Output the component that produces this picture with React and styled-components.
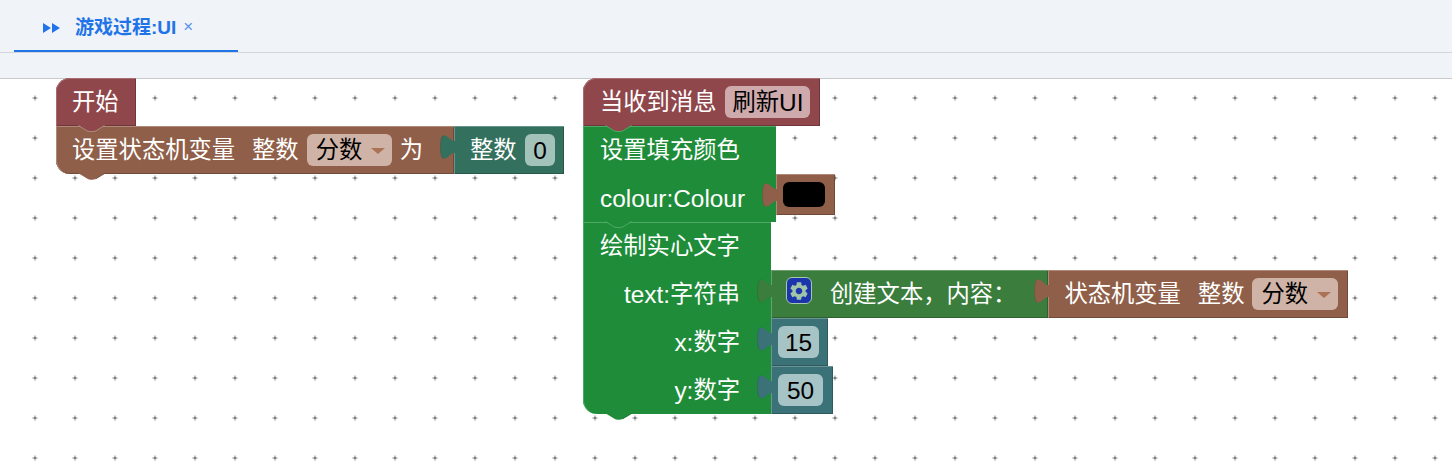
import React from "react";
import styled, { createGlobalStyle } from "styled-components";
import { MdSettings } from "react-icons/md";

const tones = {
  event: { bg: "#8f474c", hi: "#a66c70", lo: "#6f373b", chip: "#cfaaac", arrow: "#8f474c" },
  variable: { bg: "#8f5f49", hi: "#b08a79", lo: "#6f4a39", chip: "#cfb3a6", arrow: "#ab7256" },
  action: { bg: "#1e8c38", hi: "#4ea965", lo: "#176d2c", chip: "#a5d1af", arrow: "#1e8c38" },
  text: { bg: "#3a7d3c", hi: "#6e9f6f", lo: "#2d612f", chip: "#a7c9a8", arrow: "#3a7d3c" },
  integer: { bg: "#34705e", hi: "#66938a", lo: "#285748", chip: "#a3c2b9", arrow: "#34705e" },
  number: { bg: "#3b7277", hi: "#6c9498", lo: "#2e595d", chip: "#a6c3c5", arrow: "#3b7277" },
};

const GlobalStyle = createGlobalStyle`
  html, body {
    margin: 0;
    background: #ffffff;
  }
  body {
    font-family: "Liberation Sans", "Noto Sans CJK SC", sans-serif;
  }
`;

const Page = styled.div`
  width: 1452px;
  height: 474px;
  display: flex;
  flex-direction: column;
  overflow: hidden;
`;

const TabBar = styled.div`
  height: 52px;
  padding-left: 14px;
  display: flex;
  background: #f0f4f8;
  border-bottom: 1px solid #d2d5da;
`;

const Tab = styled.div`
  width: 224px;
  height: 52px;
  box-sizing: border-box;
  padding-left: 29px;
  display: flex;
  align-items: center;
  color: #2173e8;
  border-bottom: 2px solid #2173e8;
`;

const TabIcon = styled.svg`
  margin-top: 5px;
`;

const TabTitle = styled.span`
  margin-left: 15px;
  font-size: 19px;
  font-weight: 700;
`;

const TabClose = styled.span`
  margin: 3px 0 0 7px;
  font-size: 17px;
  font-weight: 400;
  opacity: 0.75;
`;

const SubBar = styled.div`
  height: 25px;
  background: #f0f4f8;
  border-bottom: 1px solid #c9cacc;
`;

const Workspace = styled.div`
  position: relative;
  flex: 1;
  background: #ffffff;
`;

const GridDots = styled.svg`
  position: absolute;
  inset: 0;
  width: 100%;
  height: 100%;
`;

const Stack = styled.div`
  position: absolute;
  left: ${(p) => p.$x}px;
  top: -1px;
  display: flex;
  flex-direction: column;
  align-items: flex-start;
`;

const Row = styled.div`
  display: flex;
  align-items: flex-start;
`;

const Block = styled.div`
  position: relative;
  box-sizing: border-box;
  display: flex;
  align-items: center;
  height: ${(p) => p.$h || 48}px;
  padding: 2px ${(p) => p.$pr ?? 10}px 0 ${(p) => p.$pl ?? 16}px;
  color: #ffffff;
  font-size: 23.3px;
  line-height: 1;
  white-space: nowrap;
  background: ${(p) => tones[p.$tone].bg};
  box-shadow: inset 0 1px ${(p) => tones[p.$tone].hi}, inset 1px 0 ${(p) => tones[p.$tone].hi},
    inset 0 -1px ${(p) => tones[p.$tone].lo}, inset -1px 0 ${(p) => tones[p.$tone].lo};
  border-radius: ${(p) => (p.$hat ? "14px 0 0 0" : p.$foot ? "0 0 0 14px" : "0")};
`;

const Statement = styled.div`
  position: relative;
  display: flex;
  flex-direction: column;
  align-items: flex-start;
`;

const LabelCell = styled(Block)`
  width: ${(p) => p.$w}px;
  padding: 2px ${(p) => (p.$right ? 31 : 0)}px 0 ${(p) => (p.$right ? 0 : 17)}px;
  justify-content: ${(p) => (p.$right ? "flex-end" : "flex-start")};
  box-shadow: ${(p) => (p.$first ? `inset 0 1px ${tones[p.$tone].hi},` : "")} inset 1px 0 ${(p) => tones[p.$tone].hi};
`;

const Latin = styled.span`
  font-size: 24.4px;
`;

const Chip = styled.span`
  display: inline-flex;
  align-items: center;
  box-sizing: border-box;
  height: 32px;
  margin: -2px 0 0 ${(p) => p.$ml ?? 8}px;
  padding: 2px ${(p) => p.$pr ?? p.$px ?? 7}px 0 ${(p) => p.$px ?? 7}px;
  border-radius: 6px;
  color: #000000;
  background: ${(p) => tones[p.$tone].chip};
`;

const Swatch = styled.span`
  width: 42px;
  height: 25px;
  margin: -2px 0 0 -9px;
  border-radius: 6px;
  background: #000000;
`;

const Arrow = styled.span`
  width: 0;
  height: 0;
  margin-left: 9px;
  border-left: 7.5px solid transparent;
  border-right: 7.5px solid transparent;
  border-top: 6px solid ${(p) => tones[p.$tone].arrow};
`;

const Spaced = styled.span`
  margin-left: ${(p) => p.$ml}px;
`;

const Mutator = styled.span`
  display: inline-flex;
  align-items: center;
  justify-content: center;
  box-sizing: border-box;
  width: 26px;
  height: 27px;
  margin: 0 18px 9px 0;
  border-radius: 6px;
  border: 1.5px solid #a9c8ab;
  color: #a0c4a8;
  background: #1b36ad;
  font-size: 22px;
`;

const NotchShape = styled.svg`
  position: absolute;
  left: 22px;
  bottom: -6px;
  z-index: 1;
  width: 27px;
  height: 7px;
`;

const Notch = ({ tone, under }) => (
  <NotchShape viewBox="0 0 27 7">
    <path d="M0 0 L9 5.6 Q11 6.8 13 6.8 H14 Q16 6.8 18 5.6 L27 0 Z" fill={tones[tone].bg} />
    {under ? (
      <path
        d="M0.5 0.5 L9 5.9 Q11 6.6 13 6.6 H14 Q16 6.6 18 5.9 L26.5 0.5"
        stroke={tones[under].hi}
        strokeWidth="1"
        fill="none"
      />
    ) : (
      <path d="M17.5 5.9 L26.5 0.5" stroke={tones[tone].lo} strokeWidth="1" fill="none" />
    )}
  </NotchShape>
);

const TabShape = styled.svg`
  position: absolute;
  left: -14px;
  top: 9px;
  z-index: 1;
  width: 15px;
  height: 24px;
`;

const PuzzleTab = ({ tone }) => (
  <TabShape viewBox="0 0 15 24">
    <path
      d="M15 6 H14 C11 6 8 0.5 4 0.5 C1.5 0.5 0.5 5 0.5 12 C0.5 19 1.5 23.5 4 23.5 C8 23.5 11 18 14 18 H15 Z"
      fill={tones[tone].bg}
    />
    <path
      d="M4 0.5 C1.5 0.5 0.5 5 0.5 12 C0.5 19 1.5 23.5 4 23.5"
      fill="none"
      stroke={tones[tone].lo}
      strokeOpacity="0.6"
      strokeWidth="0.6"
    />
  </TabShape>
);

const Dots = () => (
  <GridDots>
    <defs>
      <pattern id="dots" width="40" height="40" patternUnits="userSpaceOnUse" x="15" y="-1">
        <path d="M17.5 20 H22.5 M20 17.5 V22.5" stroke="#828282" strokeWidth="1" />
        <circle cx="20" cy="20" r="1" fill="#6f6f6f" />
      </pattern>
    </defs>
    <rect width="100%" height="100%" fill="url(#dots)" />
  </GridDots>
);

const Dropdown = ({ tone, children }) => (
  <Chip $tone={tone} $px={9} $pr={6.5}>
    {children}
    <Arrow $tone={tone} />
  </Chip>
);

const StartStack = () => (
  <Stack $x={56}>
    <Block $tone="event" $hat $pr={17}>
      开始
      <Notch tone="event" under="variable" />
    </Block>
    <Row>
      <Block $tone="variable" $foot $pr={31}>
        设置状态机变量<Spaced $ml={17}>整数</Spaced>
        <Dropdown tone="variable">分数</Dropdown>
        <Spaced $ml={8}>为</Spaced>
        <Notch tone="variable" />
      </Block>
      <Block $tone="integer" $pr={9}>
        <PuzzleTab tone="integer" />
        整数
        <Chip $tone="integer" $px={8.5}>
          <Latin>0</Latin>
        </Chip>
      </Block>
    </Row>
  </Stack>
);

const MessageStack = () => (
  <Stack $x={583}>
    <Block $tone="event" $hat $pl={17}>
      当收到消息
      <Chip $tone="event" $ml={9}>
        刷新<Latin>UI</Latin>
      </Chip>
      <Notch tone="event" under="action" />
    </Block>
    <Statement>
      <LabelCell $tone="action" $w={193} $first>
        设置填充颜色
      </LabelCell>
      <Row>
        <LabelCell $tone="action" $w={193}>
          <Latin>colour:Colour</Latin>
        </LabelCell>
        <Block $tone="variable" $h={41}>
          <PuzzleTab tone="variable" />
          <Swatch />
        </Block>
      </Row>
      <Notch tone="action" under="action" />
    </Statement>
    <Statement>
      <LabelCell $tone="action" $w={188} $first>
        绘制实心文字
      </LabelCell>
      <Row>
        <LabelCell $tone="action" $w={188} $right>
          <Latin>text:</Latin>字符串
        </LabelCell>
        <Block $tone="text" $pl={15} $pr={32}>
          <PuzzleTab tone="text" />
          <Mutator>
            <MdSettings />
          </Mutator>
          创建文本，内容：
        </Block>
        <Block $tone="variable">
          <PuzzleTab tone="variable" />
          状态机变量<Spaced $ml={17}>整数</Spaced>
          <Dropdown tone="variable">分数</Dropdown>
        </Block>
      </Row>
      <Row>
        <LabelCell $tone="action" $w={188} $right>
          <Latin>x:</Latin>数字
        </LabelCell>
        <Block $tone="number" $pl={7} $pr={9}>
          <PuzzleTab tone="number" />
          <Chip $tone="number" $ml={0} $px={7}>
            <Latin>15</Latin>
          </Chip>
        </Block>
      </Row>
      <Row>
        <LabelCell $tone="action" $w={188} $right $foot>
          <Latin>y:</Latin>数字
        </LabelCell>
        <Block $tone="number" $pl={7} $pr={9.5}>
          <PuzzleTab tone="number" />
          <Chip $tone="number" $ml={0} $px={9}>
            <Latin>50</Latin>
          </Chip>
        </Block>
      </Row>
      <Notch tone="action" />
    </Statement>
  </Stack>
);

export default function App() {
  return (
    <Page>
      <GlobalStyle />
      <TabBar>
        <Tab>
          <TabIcon width="17" height="10" viewBox="0 0 17 10">
            <path d="M0 0 L8 5 L0 10 Z M9 0 L17 5 L9 10 Z" fill="#2173e8" />
          </TabIcon>
          <TabTitle>游戏过程:UI</TabTitle>
          <TabClose>×</TabClose>
        </Tab>
      </TabBar>
      <SubBar />
      <Workspace>
        <Dots />
        <StartStack />
        <MessageStack />
      </Workspace>
    </Page>
  );
}
